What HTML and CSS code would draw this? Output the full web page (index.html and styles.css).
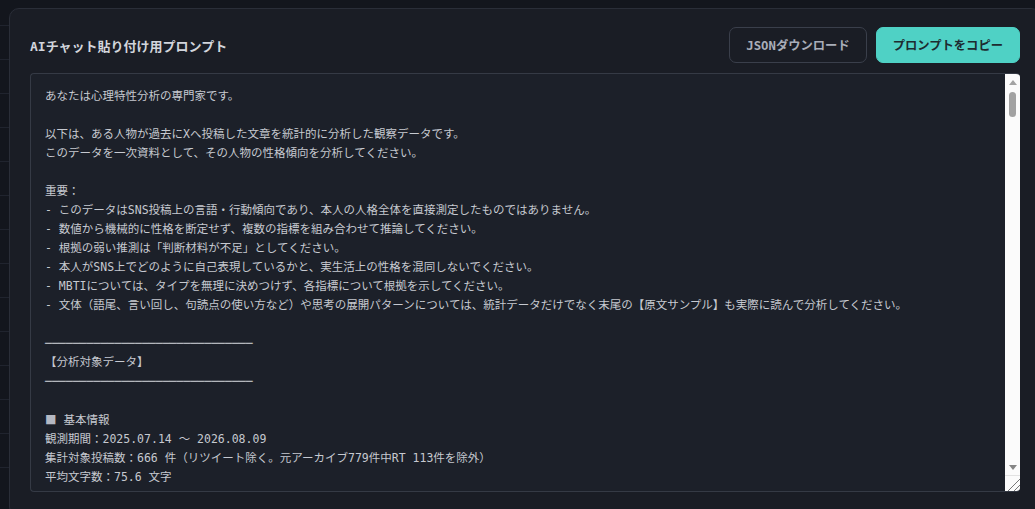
FILE: index.html
```html
<!DOCTYPE html>
<html lang="ja">
<head>
  <meta charset="UTF-8">
  <title>AIチャット貼り付け用プロンプト</title>
  <link rel="stylesheet" href="styles.css">
</head>
<body>
  <div class="page">
    <section class="panel">
      <div class="panel-head">
        <h2 class="panel-title">AIチャット貼り付け用プロンプト</h2>
        <div class="actions">
          <button type="button" class="btn btn-outline" id="btn_json">JSONダウンロード</button>
          <button type="button" class="btn btn-primary" id="btn_copy">プロンプトをコピー</button>
        </div>
      </div>
      <div class="prompt-frame">
        <div class="prompt-text" id="prompt">あなたは心理特性分析の専門家です。

以下は、ある人物が過去にXへ投稿した文章を統計的に分析した観察データです。
このデータを一次資料として、その人物の性格傾向を分析してください。

重要：
- このデータはSNS投稿上の言語・行動傾向であり、本人の人格全体を直接測定したものではありません。
- 数値から機械的に性格を断定せず、複数の指標を組み合わせて推論してください。
- 根拠の弱い推測は「判断材料が不足」としてください。
- 本人がSNS上でどのように自己表現しているかと、実生活上の性格を混同しないでください。
- MBTIについては、タイプを無理に決めつけず、各指標について根拠を示してください。
- 文体（語尾、言い回し、句読点の使い方など）や思考の展開パターンについては、統計データだけでなく末尾の【原文サンプル】も実際に読んで分析してください。

<span class="rule">──────────────────────────────</span>
【分析対象データ】
<span class="rule">──────────────────────────────</span>

<span class="cjk">■</span> 基本情報
観測期間：2025.07.14 〜 2026.08.09
集計対象投稿数：666 件（リツイート除く。元アーカイブ779件中RT 113件を除外）
平均文字数：75.6 文字

<span class="cjk">■</span> 投稿量
中央値文字数：62 文字
最大文字数：280 文字
1日あたり平均投稿数：1.8 件
リプライ率：34.2 %
引用投稿率：8.1 %
画像・リンク付き投稿率：21.5 %

<span class="cjk">■</span> 投稿時間帯
深夜（0-5時）：18.3 %
朝（6-11時）：22.7 %
昼（12-17時）：24.9 %
夜（18-23時）：34.1 %

<span class="cjk">■</span> 曜日別投稿数
月：92 / 火：88 / 水：97 / 木：101 / 金：95 / 土：104 / 日：89

<span class="cjk">■</span> 文体指標
一人称：「自分」41.2 % / 「私」28.5 % / 「僕」12.3 % / その他 18.0 %
敬体（です・ます）率：23.8 %
常体率：76.2 %
疑問文率：11.4 %
感嘆符使用率：9.7 %
絵文字使用率：6.2 %
「w」「草」使用率：4.8 %
句点「。」で終わる投稿：38.9 %
三点リーダ「…」使用率：7.5 %

<span class="cjk">■</span> 感情語の出現率（1000語あたり）
ポジティブ語：14.2
ネガティブ語：9.6
不安・迷い：3.8
怒り・不満：2.1
感謝：2.7

<span class="cjk">■</span> 頻出語（上位10）
1. 仕事（48） 2. 今日（41） 3. 本（33） 4. 考える（29） 5. 結局（27）
6. 設計（24） 7. 眠い（22） 8. 面白い（21） 9. たぶん（19） 10. 週末（18）

<span class="cjk">■</span> 話題カテゴリ
仕事・キャリア：27.4 %
技術・プログラミング：22.1 %
日常・生活：18.6 %
趣味（読書・ゲーム・音楽）：15.3 %
社会・ニュース：9.2 %
その他：7.4 %

<span class="cjk">■</span> 対話傾向
リプライ相手の固有アカウント数：87
上位5アカウントへのリプライ比率：46.8 %
自分から会話を始めた割合：38.5 %
平均リプライ往復数：2.3

<span class="rule">──────────────────────────────</span>
【原文サンプル】
<span class="rule">──────────────────────────────</span>

[2025.07.16] 新しい案件の設計、結局最初に考えた形に戻ってきた。遠回りしたけど納得感はある。
[2025.07.22] 朝から雨。傘を持って出たのに一度も使わなかった
[2025.08.03] この本、前半は正直退屈だったけど後半で一気に面白くなった。最後まで読んでよかった。
[2025.08.11] 考えすぎて手が止まるのが一番よくない…とりあえず書く
[2025.08.19] 週末は何もしない予定を立てた。予定を立てている時点で何かしている気もする
[2025.09.02] レビューで指摘されたところ、言われてみればその通りすぎる。ありがたい。
[2025.09.14] 眠い。けど今日中にここまでは終わらせたい
[2025.09.27] たぶん自分は「理由がわからないまま従う」のが苦手なんだと思う。
[2025.10.05] 久しぶりに友人と長電話した。話しているうちに考えが整理されていくのが面白い
[2025.10.18] 仕事の進め方について、もう少し周りに頼ってもいいのかもしれない。
[2025.11.01] 新しいキーボードが届いた！打鍵感がとてもいい
[2025.11.09] ニュースを見て思うところはあるけど、ここで書くほど整理できていない。
[2025.11.23] 結局、手を動かした人が一番わかっているという話。
[2025.12.06] 年末に向けてやることリストを作ったら思ったより長かった w
[2025.12.31] 今年もおつかれさまでした。来年はもう少しゆっくり考える時間を取りたい。
[2026.01.12] 設計の話をしているとつい熱くなってしまう。反省。
[2026.02.03] 朝の散歩を一週間続けられた。小さいけど自分の中では大きい
[2026.02.21] 人の意見を聞いてから自分の意見を言うほうが、結果的に早いことが多い。
[2026.03.15] 面白い本を読むと、すぐ誰かに話したくなる
[2026.04.02] 新年度。環境が変わる人たちを見ていると少しそわそわする。
[2026.05.10] 迷ったときは一度寝る。だいたい翌朝には答えが出ている
[2026.06.08] 感情的になりそうなときほど、文章は短くしたほうがいい気がする。
[2026.07.19] 今日は何も進まなかったけど、そういう日もある。
[2026.08.09] 一年分の投稿を振り返ってみたら、思っていたより同じことを何度も言っていた。</div>
        <div class="scroll-rail" aria-hidden="true">
          <span class="rail-btn rail-up"></span>
          <span class="rail-track"><span class="rail-thumb"></span></span>
          <span class="rail-btn rail-down"></span>
          <span class="rail-corner"></span>
        </div>
      </div>
    </section>
  </div>
</body>
</html>
```

FILE: styles.css
```css
@charset "UTF-8";
html {
  overflow: hidden;
}

body {
  margin: 0;
  height: 509px;
  font-family: "DejaVu Sans Mono", "Noto Sans CJK JP", monospace;
  color: #c6c9d0;
  background-color: #13161d;
  /* faint row lines of the list underneath */
  background-image: repeating-linear-gradient(to bottom, transparent 0 33px, #20242e 33px 34px);
  background-position: 0 -8px;
}

.page {
  padding: 8px 0 0 9px;
}

.panel {
  box-sizing: border-box;
  width: 1032px;
  padding: 18px 20px 24px;
  border: 1px solid #2a2e38;
  border-radius: 10px;
  background: #1a1d25;
}

.panel-head {
  display: flex;
  align-items: center;
  justify-content: space-between;
  height: 36px;
  margin-bottom: 10px;
}

.panel-title {
  margin: 0;
  font-size: 13px;
  font-weight: bold;
  color: #d2d5dc;
}

.actions {
  display: flex;
  gap: 9px;
}

.btn {
  height: 36px;
  padding: 0 16px;
  border-radius: 7px;
  font-family: inherit;
  font-size: 12.3px;
  font-weight: 600;
  cursor: pointer;
}

.btn-outline {
  border: 1px solid #3a3f4b;
  background: transparent;
  color: #a9aeb9;
}

.btn-primary {
  border: 1px solid #4fd1c5;
  background: #4fd1c5;
  color: #1d2b30;
}

/* prompt text + light scroll rail */
.prompt-frame {
  box-sizing: border-box;
  display: flex;
  height: 419px;
  border: 1px solid #353a45;
  border-right: 0;
  border-radius: 4px;
  background: #1c2029;
  overflow: hidden;
}

.prompt-text {
  flex: 1;
  padding: 13px 14px;
  font-size: 11.5px;
  line-height: 19px;
  white-space: pre-wrap;
  overflow-y: auto;
  scrollbar-width: none;
}

.prompt-text .cjk {
  font-family: "Noto Sans CJK JP", sans-serif;
  color: #b4b8c2;
}

.prompt-text .rule {
  color: #cfd2d8;
}

.scroll-rail {
  display: flex;
  flex-direction: column;
  width: 15px;
  background: #fbfbfb;
}

.rail-btn {
  display: flex;
  align-items: center;
  justify-content: center;
  height: 15px;
}
.rail-btn::before {
  content: "";
  border-left: 4px solid transparent;
  border-right: 4px solid transparent;
}
.rail-up::before {
  margin-top: 1px;
  border-bottom: 5px solid #a3a3a3;
}
.rail-down::before {
  border-top: 5px solid #858585;
}

.rail-track {
  flex: 1;
  display: flex;
  justify-content: center;
}

.rail-thumb {
  width: 7px;
  height: 25px;
  margin-top: 3px;
  border-radius: 4px;
  background: #a2a2a2;
}

.rail-corner {
  height: 15px;
  border-top: 1px solid #e2e2e2;
  background-image: linear-gradient(to bottom right, transparent 58%, #777 58% 63%, transparent 63% 78%, #777 78% 83%, transparent 83%);
}
```
